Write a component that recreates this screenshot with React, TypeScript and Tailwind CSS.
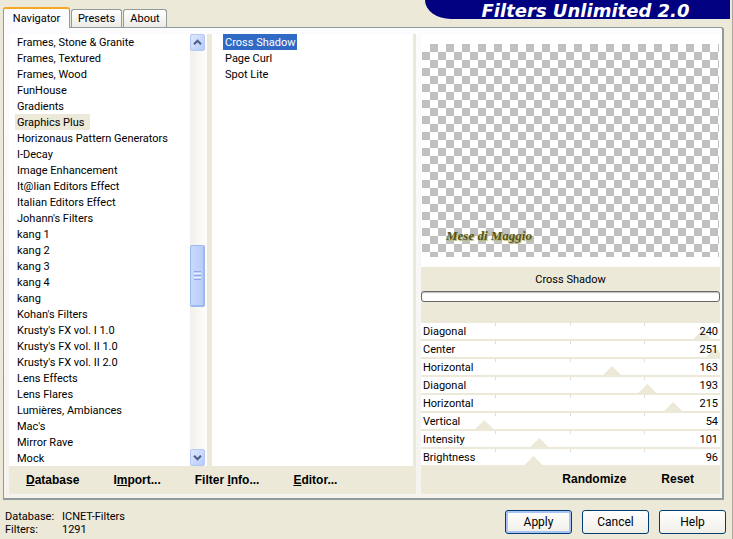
import { useState } from "react";
import type { ReactNode } from "react";

const categories = [
  "Frames, Stone & Granite",
  "Frames, Textured",
  "Frames, Wood",
  "FunHouse",
  "Gradients",
  "Graphics Plus",
  "Horizonaus Pattern Generators",
  "I-Decay",
  "Image Enhancement",
  "It@lian Editors Effect",
  "Italian Editors Effect",
  "Johann's Filters",
  "kang 1",
  "kang 2",
  "kang 3",
  "kang 4",
  "kang",
  "Kohan's Filters",
  "Krusty's FX vol. I 1.0",
  "Krusty's FX vol. II 1.0",
  "Krusty's FX vol. II 2.0",
  "Lens Effects",
  "Lens Flares",
  "Lumières, Ambiances",
  "Mac's",
  "Mirror Rave",
  "Mock",
];

const filters = ["Cross Shadow", "Page Curl", "Spot Lite"];

const params = [
  { label: "Diagonal", value: 240 },
  { label: "Center", value: 251 },
  { label: "Horizontal", value: 163 },
  { label: "Diagonal", value: 193 },
  { label: "Horizontal", value: 215 },
  { label: "Vertical", value: 54 },
  { label: "Intensity", value: 101 },
  { label: "Brightness", value: 96 },
];

const tabBase =
  "rounded-t-[3px] border border-b-0 border-[#919b9c] bg-gradient-to-b from-white to-[#ecebe6]";

const sliderClass = `
  col-start-1 row-start-1 -mx-[9px] h-4 appearance-none bg-transparent outline-none
  [&::-webkit-slider-thumb]:appearance-none
  [&::-webkit-slider-thumb]:h-4 [&::-webkit-slider-thumb]:w-[18px]
  [&::-webkit-slider-thumb]:bg-[#ece9d8]
  [&::-webkit-slider-thumb]:[clip-path:polygon(50%_44%,100%_100%,0_100%)]
`;

function Slider({ id, label, initial }: { id: string; label: string; initial: number }) {
  const [value, setValue] = useState(initial);

  return (
    <div className="grid h-[18px] grid-cols-1 grid-rows-[16px] overflow-hidden border-b-2 border-[#ece9d8] bg-white last:h-4 last:border-b-0">
      <div className="col-start-1 row-start-1 grid h-[3px] grid-cols-4 divide-x divide-[#e4e0cc]">
        <span />
        <span />
        <span />
        <span />
      </div>
      <input
        id={id}
        type="range"
        min={0}
        max={255}
        value={value}
        onChange={(e) => setValue(Number(e.target.value))}
        className={sliderClass}
      />
      <div className="pointer-events-none z-10 col-start-1 row-start-1 flex justify-between px-0.5 leading-[18px]">
        <label htmlFor={id}>{label}</label>
        <output htmlFor={id}>{value}</output>
      </div>
    </div>
  );
}

function Chevron({ up = false }: { up?: boolean }) {
  return (
    <svg viewBox="0 0 15 15" className="h-[15px] w-[15px]" fill="none" stroke="#4d6185" strokeWidth="2.4">
      <path d={up ? "M3.5 9.5 7.5 5.5 11.5 9.5" : "M3.5 5.5 7.5 9.5 11.5 5.5"} />
    </svg>
  );
}

function ScrollBar() {
  const arrow =
    "flex h-[17px] w-full shrink-0 items-center justify-center rounded-[2px] border border-[#b4c8f6] bg-gradient-to-br from-[#dfe8ff] to-[#b5cbfa]";

  return (
    <div className="flex w-[17px] shrink-0 flex-col bg-gradient-to-r from-[#f2f0ea] to-[#fefefc] pr-0.5">
      <button aria-label="Scroll up" className={arrow}>
        <Chevron up />
      </button>
      <div className="flex-[194]" />
      <div className="flex flex-[60] flex-col items-center justify-center gap-px rounded-[2px] border border-r-2 border-b-2 border-[#9db8ec] bg-gradient-to-r from-[#cad9fd] to-[#b9cdfa]">
        <span className="h-px w-[7px] bg-[#8fa9e8]" />
        <span className="h-px w-[7px] bg-[#eef4fe]" />
        <span className="h-px w-[7px] bg-[#8fa9e8]" />
        <span className="h-px w-[7px] bg-[#eef4fe]" />
        <span className="h-px w-[7px] bg-[#8fa9e8]" />
      </div>
      <div className="flex-[142]" />
      <button aria-label="Scroll down" className={arrow}>
        <Chevron />
      </button>
    </div>
  );
}

function DialogButton({ children, primary = false }: { children: ReactNode; primary?: boolean }) {
  return (
    <button
      className={`h-6 w-[67px] rounded-[3px] border border-[#003c74] bg-gradient-to-b from-white to-[#f0efe8] text-center text-[12px] ${
        primary ? "shadow-[inset_0_0_0_2px_#a9c4f2]" : ""
      }`}
    >
      {children}
    </button>
  );
}

export default function App() {
  const [category, setCategory] = useState("Graphics Plus");
  const [filter, setFilter] = useState("Cross Shadow");

  return (
    <div className="min-h-screen border-r border-[#aca899] bg-[#ece9d8] font-['Roboto','Liberation_Sans',sans-serif] text-[11px] text-black">
      <header className="flex h-[27px] items-start justify-between pl-[3px] pr-0.5">
        <nav className="flex h-7 items-end gap-px self-end pt-[7px]" role="tablist">
          <button
            role="tab"
            aria-selected="true"
            className="relative z-10 -mb-px h-[21px] w-[67px] rounded-t-[3px] border border-t-2 border-b-0 border-[#919b9c] border-t-[#f5a623] bg-[#fcfcfe] leading-4"
          >
            Navigator
          </button>
          <button role="tab" aria-selected="false" className={`${tabBase} h-[18px] w-[51px] leading-4`}>
            Presets
          </button>
          <button role="tab" aria-selected="false" className={`${tabBase} h-[18px] w-[44px] leading-4`}>
            About
          </button>
        </nav>
        <h1 className="h-[19px] w-[305px] rounded-bl-[26px_19px] bg-[#000080] pl-4 text-center font-['DejaVu_Sans',sans-serif] text-[18px] font-black italic leading-[21px] text-white">
          Filters Unlimited 2.0
        </h1>
      </header>

      <main className="mr-2 ml-[3px] grid grid-cols-[407fr_299fr] gap-[5px] rounded-tr-[3px] border border-r-2 border-b-2 border-[#919b9c] bg-gradient-to-b from-[#fcfcfe] to-[#f4f3ee] pt-1.5 pr-0.5 pb-1 pl-[5px]">
        <section className="flex min-w-0 flex-col bg-[#ece9d8]">
          <div className="flex flex-1 gap-[5px] pr-[3px]">
            <div className="flex w-[198px] shrink-0 bg-white">
              <ul className="min-w-0 flex-1 pl-1.5">
                {categories.map((name) => (
                  <li key={name} className="flex h-4">
                    <button
                      onClick={() => setCategory(name)}
                      className={`h-4 whitespace-nowrap px-0.5 pt-px leading-4 ${
                        name === category ? "bg-[#ece9d8] pr-1.5" : ""
                      }`}
                    >
                      {name}
                    </button>
                  </li>
                ))}
              </ul>
              <ScrollBar />
            </div>
            <ul className="min-w-0 flex-1 bg-white pl-[11px]">
              {filters.map((name) => (
                <li key={name} className="flex h-4">
                  <button
                    onClick={() => setFilter(name)}
                    className={`h-4 whitespace-nowrap px-0.5 pt-px leading-4 ${
                      name === filter ? "bg-[#316ac5] text-white" : ""
                    }`}
                  >
                    {name}
                  </button>
                </li>
              ))}
            </ul>
          </div>
          <div className="flex h-7 items-center gap-[34px] pl-[17px] font-['Liberation_Sans',sans-serif] text-[12px] font-bold">
            <button>
              <u>D</u>atabase
            </button>
            <button>
              I<u>m</u>port...
            </button>
            <button>
              Filter <u>I</u>nfo...
            </button>
            <button>
              <u>E</u>ditor...
            </button>
          </div>
        </section>

        <section className="flex min-w-0 flex-col bg-[#ece9d8]">
          <div className="bg-white px-px pt-2.5 pb-2.5">
            <div className="h-[213px] bg-[conic-gradient(#c0c0c0_25%,#fff_0_50%,#c0c0c0_0_75%,#fff_0)] bg-[length:16px_16px] pt-[184px] pl-6">
              <p className="font-['Liberation_Serif',serif] text-[13px] font-bold italic leading-4 text-[#55551a] [text-shadow:1px_1px_1px_#b5b56a]">
                Mese di Maggio
              </p>
            </div>
          </div>
          <h2 className="h-6 text-center leading-[26px]">{filter}</h2>
          <div className="mb-[21px] h-[11px] rounded-[3px] border border-[#686868] bg-white shadow-[inset_0_1px_1px_#bebebe]" />
          <div>
            {params.map((p, i) => (
              <Slider key={i} id={`param-${i}`} label={p.label} initial={p.value} />
            ))}
          </div>
          <div className="flex h-7 items-center justify-end gap-[35px] pr-[26px] font-['Liberation_Sans',sans-serif] text-[12px] font-bold">
            <button>Randomize</button>
            <button>Reset</button>
          </div>
        </section>
      </main>

      <footer className="flex items-start justify-between pt-2.5 pr-1.5 pl-[5px]">
        <dl className="grid grid-cols-[57px_auto] leading-[13px]">
          <dt>Database:</dt>
          <dd>ICNET-Filters</dd>
          <dt>Filters:</dt>
          <dd>1291</dd>
        </dl>
        <div className="flex gap-2.5">
          <DialogButton primary>Apply</DialogButton>
          <DialogButton>Cancel</DialogButton>
          <DialogButton>Help</DialogButton>
        </div>
      </footer>
    </div>
  );
}
